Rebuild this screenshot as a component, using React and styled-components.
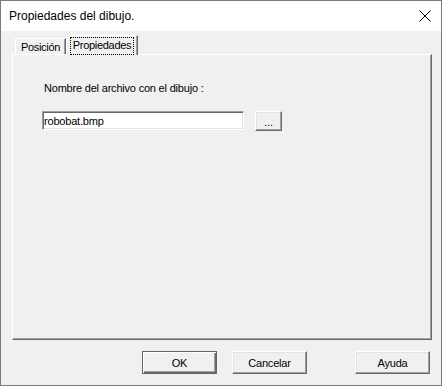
import React from 'react';
import styled, { createGlobalStyle, css } from 'styled-components';

const GlobalStyle = createGlobalStyle`
  html, body {
    margin: 0;
    padding: 0;
    background: #f0f0f0;
  }
  * {
    box-sizing: border-box;
  }
`;

const raised = css`
  border-top: 1px solid #ffffff;
  border-left: 1px solid #ffffff;
  border-right: 1px solid #696969;
  border-bottom: 1px solid #696969;
  box-shadow: inset -1px -1px 0 #a0a0a0, inset 1px 1px 0 #e3e3e3;
`;

const App = () => (
  <>
    <GlobalStyle />
    <Window>
      <TitleBar>
        <Title>Propiedades del dibujo.</Title>
        <CloseIcon width="12" height="12" viewBox="0 0 12 12">
          <path d="M0.5 0.5 L11.5 11.5 M11.5 0.5 L0.5 11.5" stroke="#000" strokeWidth="1" fill="none" />
        </CloseIcon>
      </TitleBar>
      <Body>
        <TabStrip>
          <Tab width={51}>Posición</Tab>
          <Tab width={72} selected>
            <FocusRing>Propiedades</FocusRing>
          </Tab>
        </TabStrip>
        <TabPanel>
          <FieldLabel>Nombre del archivo con el dibujo :</FieldLabel>
          <FileRow>
            <TextField defaultValue="robobat.bmp" />
            <BrowseButton>...</BrowseButton>
          </FileRow>
        </TabPanel>
        <Footer>
          <DialogButton isDefault>OK</DialogButton>
          <DialogButton>Cancelar</DialogButton>
          <DialogButton push>Ayuda</DialogButton>
        </Footer>
      </Body>
    </Window>
  </>
);

export default App;

const Window = styled.div`
  width: 442px;
  height: 386px;
  border: 1px solid #7a7a7a;
  display: flex;
  flex-direction: column;
  font-family: 'Liberation Sans', Arial, sans-serif;
  color: #000;
  overflow: hidden;
`;

const TitleBar = styled.div`
  height: 30px;
  flex-shrink: 0;
  background: #ffffff;
  display: flex;
  align-items: center;
  justify-content: space-between;
  padding: 0 10px 0 8px;
`;

const Title = styled.span`
  font-size: 12px;
`;

const CloseIcon = styled.svg`
  display: block;
`;

const Body = styled.div`
  flex: 1;
  background: #f0f0f0;
  display: flex;
  flex-direction: column;
  padding-top: 4px;
`;

const TabStrip = styled.div`
  display: flex;
  align-items: flex-end;
  height: 19px;
  margin-left: 14px;
  position: relative;
  z-index: 1;
`;

const Tab = styled.div`
  width: ${p => p.width}px;
  height: ${p => (p.selected ? 20 : 16)}px;
  margin-bottom: ${p => (p.selected ? -1 : 0)}px;
  background: #f0f0f0;
  border-top: 1px solid #ffffff;
  border-left: 1px solid #ffffff;
  border-right: 1px solid #696969;
  box-shadow: inset -1px 0 0 #a0a0a0;
  font-size: 11px;
  letter-spacing: -0.3px;
  display: flex;
  align-items: ${p => (p.selected ? 'flex-start' : 'center')};
  justify-content: center;
  padding-top: ${p => (p.selected ? 1 : 0)}px;
`;

const FocusRing = styled.span`
  border: 1px dotted #000;
  padding: 1px 2px 2px 2px;
  line-height: 13px;
`;

const TabPanel = styled.div`
  margin-left: 11px;
  width: 420px;
  height: 286px;
  flex-shrink: 0;
  border-top: 1px solid #ffffff;
  border-left: 1px solid #ffffff;
  border-right: 1px solid #696969;
  border-bottom: 1px solid #696969;
  box-shadow: inset -1px -1px 0 #a0a0a0;
  padding: 27px 0 0 29px;
`;

const FieldLabel = styled.div`
  font-size: 11px;
  letter-spacing: -0.2px;
  line-height: 13px;
  margin-left: 2px;
`;

const FileRow = styled.div`
  display: flex;
  align-items: flex-start;
  margin-top: 16px;
  gap: 11px;
`;

const TextField = styled.input`
  width: 202px;
  height: 19px;
  margin: 0;
  padding: 0 0 0 1px;
  background: #ffffff;
  border-top: 1px solid #a0a0a0;
  border-left: 1px solid #a0a0a0;
  border-right: 1px solid #ffffff;
  border-bottom: 1px solid #ffffff;
  box-shadow: inset 1px 1px 0 #696969, inset -1px -1px 0 #e3e3e3;
  font-family: 'Liberation Sans', Arial, sans-serif;
  font-size: 11px;
  letter-spacing: -0.2px;
  color: #000;
  outline: none;
`;

const BrowseButton = styled.button`
  width: 27px;
  height: 20px;
  margin: 0;
  padding: 2px 0 0 0;
  background: #f0f0f0;
  ${raised};
  font-family: 'Liberation Sans', Arial, sans-serif;
  font-size: 11px;
  color: #000;
`;

const Footer = styled.div`
  display: flex;
  padding: 11px 11px 0 141px;
  gap: 15px;
`;

const DialogButton = styled.button`
  width: 75px;
  height: 23px;
  margin: 0;
  margin-left: ${p => (p.push ? 'auto' : '0')};
  padding: 0;
  background: #f0f0f0;
  font-family: 'Liberation Sans', Arial, sans-serif;
  font-size: 11px;
  letter-spacing: -0.2px;
  color: #000;
  ${raised};
  ${p =>
    p.isDefault &&
    css`
      border: 1px solid #646464;
      box-shadow: inset 1px 1px 0 #ffffff, inset -1px -1px 0 #696969, inset -2px -2px 0 #a0a0a0;
    `};
`;
